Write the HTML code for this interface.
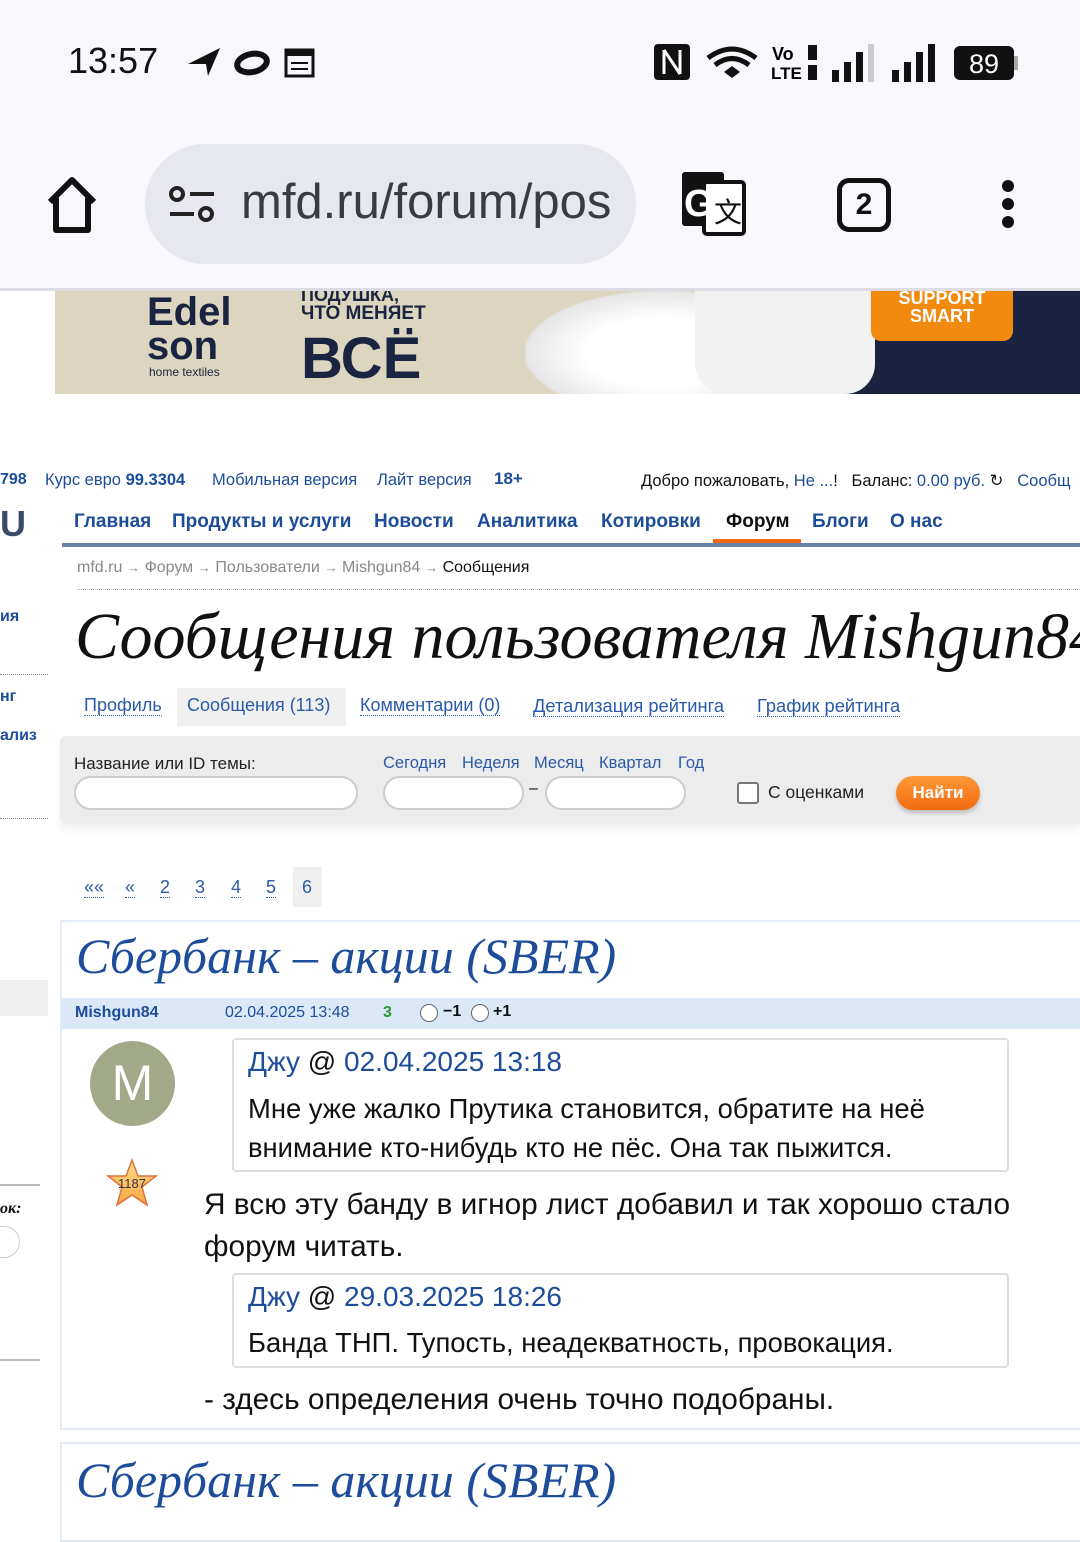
<!DOCTYPE html>
<html><head><meta charset="utf-8"><style>
*{margin:0;padding:0;box-sizing:border-box}
body{width:1080px;height:1520px;overflow:hidden;background:#fff;font-family:"Liberation Sans","DejaVu Sans",sans-serif;position:relative;color:#111}
.a{position:absolute;white-space:nowrap}
.blue{color:#1d4d9a}
.lnk{color:#2a5aa8;border-bottom:1px dotted #2a5aa8}
.ser{font-family:"Liberation Serif","DejaVu Serif",serif;font-style:italic}
.nv{position:absolute;top:511px;font-size:19px;font-weight:bold;color:#1d4d9a;white-space:nowrap}
</style></head><body>
<div class="a" style="left:0;top:0;width:1080px;height:290px;background:#f7f7fc"></div>
<div class="a" style="left:68px;top:40px;font-size:36px;color:#111">13:57</div>
<svg class="a" style="left:186px;top:44px" width="132" height="36" viewBox="0 0 132 36">
<path d="M2 20 L34 4 L22 32 L20 20 Z" fill="#111"/>
<ellipse cx="66" cy="19" rx="15" ry="9" fill="none" stroke="#111" stroke-width="6" transform="rotate(-12 66 19)"/>
<rect x="100" y="6" width="27" height="26" fill="none" stroke="#111" stroke-width="3"/><rect x="100" y="6" width="27" height="6" fill="#111"/><line x1="105" y1="19" x2="122" y2="19" stroke="#111" stroke-width="2"/><line x1="105" y1="25" x2="122" y2="25" stroke="#111" stroke-width="2"/>
</svg>
<svg class="a" style="left:652px;top:42px" width="370" height="42" viewBox="0 0 370 42">
<rect x="2" y="2" width="36" height="36" rx="4" fill="#111"/><path d="M12 8 V32 M12 8 L28 32 M28 8 V32" stroke="#fff" stroke-width="3" fill="none"/>
<path d="M56 16 Q80 -2 104 16" stroke="#111" stroke-width="5" fill="none"/><path d="M63 23 Q80 10 97 23" stroke="#111" stroke-width="5" fill="none"/><path d="M72 30 L80 24 L88 30 L80 36 Z" fill="#111"/>
<text x="120" y="18" font-size="18" font-weight="bold" font-family="Liberation Sans">Vo</text><text x="119" y="37" font-size="17" font-weight="bold" font-family="Liberation Sans">LTE</text>
<rect x="156" y="3" width="9" height="15" fill="#111"/><rect x="156" y="23" width="9" height="15" fill="#111"/>
<rect x="180" y="28" width="7" height="12" fill="#111"/><rect x="192" y="20" width="7" height="20" fill="#111"/><rect x="204" y="10" width="7" height="30" fill="#111"/><rect x="216" y="2" width="6" height="38" fill="#ccc"/>
<rect x="240" y="28" width="7" height="12" fill="#111"/><rect x="252" y="20" width="7" height="20" fill="#111"/><rect x="264" y="10" width="7" height="30" fill="#111"/><rect x="276" y="2" width="7" height="38" fill="#111"/>
<rect x="302" y="4" width="60" height="34" rx="6" fill="#111"/><rect x="362" y="14" width="4" height="14" fill="#aaa"/>
<text x="332" y="31" font-size="27" fill="#fff" text-anchor="middle" font-family="Liberation Sans">89</text>
</svg>
<svg class="a" style="left:44px;top:176px" width="56" height="58" viewBox="0 0 56 58"><path d="M6 26 L28 4 L50 26 M12 22 V54 H44 V22" stroke="#111" stroke-width="6" fill="none" stroke-linejoin="round"/></svg>
<div class="a" style="left:145px;top:144px;width:491px;height:120px;border-radius:60px;background:#e7e7ef"></div>
<svg class="a" style="left:168px;top:186px" width="48" height="38" viewBox="0 0 48 38"><circle cx="9" cy="8" r="6" stroke="#222" stroke-width="4" fill="none"/><line x1="22" y1="8" x2="46" y2="8" stroke="#222" stroke-width="4"/><line x1="2" y1="28" x2="26" y2="28" stroke="#222" stroke-width="4"/><circle cx="38" cy="28" r="6" stroke="#222" stroke-width="4" fill="none"/></svg>
<div class="a" style="left:241px;top:174px;font-size:49px;color:#3b3b44;width:372px;overflow:hidden">mfd.ru/forum/pos</div>
<svg class="a" style="left:680px;top:170px" width="68" height="68" viewBox="0 0 68 68"><rect x="2" y="2" width="42" height="54" rx="3" fill="#111"/><rect x="24" y="12" width="40" height="52" rx="3" fill="#fff" stroke="#111" stroke-width="4"/><text x="4" y="46" font-size="38" font-weight="bold" fill="#fff" font-family="Liberation Sans">G</text><text x="34" y="52" font-size="28" fill="#111" font-family="Liberation Sans">文</text></svg>
<div class="a" style="left:837px;top:178px;width:54px;height:54px;border:5px solid #111;border-radius:12px;font-size:30px;text-align:center;line-height:44px;font-weight:bold">2</div>
<svg class="a" style="left:998px;top:178px" width="20" height="52"><circle cx="10" cy="8" r="6" fill="#111"/><circle cx="10" cy="26" r="6" fill="#111"/><circle cx="10" cy="44" r="6" fill="#111"/></svg>
<div class="a" style="left:0;top:288px;width:1080px;height:3px;background:#dcdce2"></div>

<div class="a" style="left:55px;top:291px;width:1025px;height:103px;background:#dcd5bf;overflow:hidden">
<div class="a" style="left:640px;top:0;width:400px;height:103px;background:#1a2440"></div>
<div class="a" style="left:470px;top:0;width:230px;height:103px;background:radial-gradient(ellipse at 60% 60%,#fff 40%,#e6e6e6 70%,rgba(220,213,191,0) 72%)"></div>
<div class="a" style="left:640px;top:0;width:180px;height:103px;background:#f2f2f2;border-radius:0 0 30px 30px"></div>
<div class="a" style="left:92px;top:4px;font-size:40px;font-weight:bold;color:#1a2440;line-height:34px">Edel<br>son</div>
<div class="a" style="left:94px;top:74px;font-size:12px;color:#1a2440">home textiles</div>
<div class="a" style="left:246px;top:-6px;font-size:18px;font-weight:bold;color:#1a2440">ПОДУШКА,</div>
<div class="a" style="left:246px;top:12px;font-size:19px;font-weight:bold;color:#1a2440">ЧТО МЕНЯЕТ</div>
<div class="a" style="left:246px;top:38px;font-size:58px;font-weight:bold;color:#1a2440;line-height:60px">ВСЁ</div>
<div class="a" style="left:816px;top:-10px;width:142px;height:60px;background:#f28a10;border-radius:0 0 10px 10px;color:#fff;font-weight:bold;font-size:18px;text-align:center;line-height:18px;padding-top:8px">SUPPORT<br>SMART</div>
</div>

<div class="a" style="left:0;top:471px;font-size:16px;color:#1d4d9a"><b>798</b></div>
<div class="a" style="left:45px;top:471px;font-size:16.5px;color:#1d4d9a">Курс евро <b>99.3304</b></div>
<div class="a" style="left:212px;top:471px;font-size:16.5px;color:#1d4d9a">Мобильная версия</div>
<div class="a" style="left:377px;top:471px;font-size:16.5px;color:#1d4d9a">Лайт версия</div>
<div class="a" style="left:494px;top:469px;font-size:17px;font-weight:bold;color:#1d4d9a">18+</div>
<div class="a" style="left:641px;top:471px;font-size:16.5px;color:#111">Добро пожаловать, <span class="blue">Не ...</span>!&nbsp;&nbsp;&nbsp;Баланс: <span class="blue">0.00 руб.</span> ↻&nbsp;&nbsp;&nbsp;<span class="blue">Сообщ</span></div>
<div class="a" style="left:0;top:503px;font-size:36px;font-weight:bold;color:#3a4a6a">U</div>
<div class="nv" style="left:74px">Главная</div>
<div class="nv" style="left:172px">Продукты и услуги</div>
<div class="nv" style="left:374px">Новости</div>
<div class="nv" style="left:477px">Аналитика</div>
<div class="nv" style="left:601px">Котировки</div>
<div class="nv" style="left:726px;color:#111">Форум</div>
<div class="nv" style="left:812px">Блоги</div>
<div class="nv" style="left:890px">О нас</div>
<div class="a" style="left:713px;top:539px;width:88px;height:6px;background:#f26a10"></div>
<div class="a" style="left:62px;top:543px;width:1018px;height:4px;background:#6a80aa"></div>
<div class="a" style="left:77px;top:559px;font-size:16px;color:#888">mfd.ru <small>→</small> Форум <small>→</small> Пользователи <small>→</small> Mishgun84 <small>→</small> <span style="color:#111">Сообщения</span></div>
<div class="a" style="left:77px;top:589px;width:1003px;border-top:1px dotted #aaa"></div>
<div class="a" style="left:0;top:608px;font-size:16px;font-weight:bold;color:#1d4d9a">ия</div>
<div class="a" style="left:0;top:674px;width:48px;border-top:1px dotted #888"></div>
<div class="a" style="left:0;top:688px;font-size:16px;font-weight:bold;color:#1d4d9a">нг</div>
<div class="a" style="left:0;top:727px;font-size:16px;font-weight:bold;color:#1d4d9a">ализ</div>
<div class="a" style="left:0;top:818px;width:48px;border-top:1px dotted #888"></div>

<div class="a ser" style="left:75px;top:599px;font-size:66px;color:#111">Сообщения пользователя Mishgun84</div>

<div class="a" style="left:177px;top:688px;width:169px;height:38px;background:#f0f0f0"></div>
<div class="a" style="left:84px;top:695px;font-size:18px"><span class="lnk">Профиль</span></div>
<div class="a" style="left:187px;top:695px;font-size:18px;color:#2a5aa8">Сообщения (113)</div>
<div class="a" style="left:360px;top:695px;font-size:18px"><span class="lnk">Комментарии (0)</span></div>
<div class="a" style="left:533px;top:695px;font-size:18.3px"><span class="lnk">Детализация рейтинга</span></div>
<div class="a" style="left:757px;top:695px;font-size:18.3px"><span class="lnk">График рейтинга</span></div>

<div class="a" style="left:60px;top:736px;width:1020px;height:88px;background:#ececec;border-radius:6px 0 0 6px;box-shadow:0 6px 8px rgba(0,0,0,0.06)"></div>
<div class="a" style="left:74px;top:754px;font-size:17px;color:#222">Название или ID темы:</div>
<div class="a" style="left:74px;top:776px;width:284px;height:34px;background:#fff;border:2px solid #ccc;border-radius:17px"></div>
<div class="a" style="left:383px;top:754px;font-size:16.5px;color:#2a5aa8">Сегодня</div>
<div class="a" style="left:462px;top:754px;font-size:16.5px;color:#2a5aa8">Неделя</div>
<div class="a" style="left:534px;top:754px;font-size:16.5px;color:#2a5aa8">Месяц</div>
<div class="a" style="left:599px;top:754px;font-size:16.5px;color:#2a5aa8">Квартал</div>
<div class="a" style="left:678px;top:754px;font-size:16.5px;color:#2a5aa8">Год</div>
<div class="a" style="left:383px;top:776px;width:141px;height:34px;background:#fff;border:2px solid #ccc;border-radius:17px"></div>
<div class="a" style="left:529px;top:780px;font-size:16px">–</div>
<div class="a" style="left:545px;top:776px;width:141px;height:34px;background:#fff;border:2px solid #ccc;border-radius:17px"></div>
<div class="a" style="left:737px;top:782px;width:22px;height:22px;background:#fff;border:2px solid #777;border-radius:3px"></div>
<div class="a" style="left:768px;top:782px;font-size:17.5px;color:#222">С оценками</div>
<div class="a" style="left:896px;top:776px;width:84px;height:34px;background:linear-gradient(#ff9a3a,#f26a10);border-radius:17px;color:#fff;font-weight:bold;font-size:17px;text-align:center;line-height:34px;box-shadow:0 3px 4px rgba(0,0,0,0.2)">Найти</div>

<div class="a" style="left:293px;top:867px;width:29px;height:40px;background:#f0f0f0"></div>
<div class="a" style="left:84px;top:877px;font-size:18px"><span class="lnk">««</span></div>
<div class="a" style="left:125px;top:877px;font-size:18px"><span class="lnk">«</span></div>
<div class="a" style="left:160px;top:877px;font-size:18px"><span class="lnk">2</span></div>
<div class="a" style="left:195px;top:877px;font-size:18px"><span class="lnk">3</span></div>
<div class="a" style="left:231px;top:877px;font-size:18px"><span class="lnk">4</span></div>
<div class="a" style="left:266px;top:877px;font-size:18px"><span class="lnk">5</span></div>
<div class="a" style="left:302px;top:877px;font-size:18px;color:#2a5aa8">6</div>

<div class="a" style="left:60px;top:920px;width:1030px;height:510px;border:2px solid #e2ebf3"></div>
<div class="a" style="left:0;top:980px;width:48px;height:36px;background:#f0f0f0"></div>
<div class="a ser" style="left:76px;top:927px;font-size:50px;color:#1d4d9a">Сбербанк – акции (SBER)</div>
<div class="a" style="left:62px;top:998px;width:1018px;height:31px;background:#dbe8f8"></div>
<div class="a" style="left:75px;top:1004px;font-size:16px;font-weight:bold;color:#1d4d9a">Mishgun84</div>
<div class="a" style="left:225px;top:1004px;font-size:16px;color:#1d4d9a">02.04.2025 13:48</div>
<div class="a" style="left:383px;top:1004px;font-size:16px;font-weight:bold;color:#2a9a2a">3</div>
<div class="a" style="left:420px;top:1004px;width:18px;height:18px;border:1px solid #666;border-radius:50%;background:#fff"></div>
<div class="a" style="left:443px;top:1003px;font-size:16px;font-weight:bold">−1</div>
<div class="a" style="left:471px;top:1004px;width:18px;height:18px;border:1px solid #666;border-radius:50%;background:#fff"></div>
<div class="a" style="left:493px;top:1003px;font-size:16px;font-weight:bold">+1</div>
<div class="a" style="left:90px;top:1041px;width:85px;height:85px;border-radius:50%;background:#a1a988;color:#fff;font-size:50px;text-align:center;line-height:85px">M</div>
<svg class="a" style="left:106px;top:1158px" width="52" height="50" viewBox="0 0 52 50"><defs><linearGradient id="g" x1="0" y1="0" x2="0" y2="1"><stop offset="0" stop-color="#ffe08a"/><stop offset="1" stop-color="#f5a640"/></linearGradient></defs><path d="M26 2 L32 18 L50 18 L36 29 L41 47 L26 37 L11 47 L16 29 L2 18 L20 18 Z" fill="url(#g)" stroke="#e07040" stroke-width="1.5"/><text x="26" y="30" font-size="13" text-anchor="middle" fill="#334" font-family="Liberation Sans">1187</text></svg>
<div class="a" style="left:0;top:1184px;width:40px;height:2px;background:#bbb"></div>
<div class="a ser" style="left:0;top:1200px;font-size:16px;font-weight:bold">ок:</div>
<div class="a" style="left:-20px;top:1226px;width:40px;height:32px;border:1px solid #ccc;border-radius:16px"></div>
<div class="a" style="left:0;top:1359px;width:40px;height:2px;background:#bbb"></div>

<div class="a" style="left:232px;top:1038px;width:777px;height:134px;border:2px solid #ddd;border-radius:4px"></div>
<div class="a" style="left:248px;top:1046px;font-size:28px;color:#1d4d9a">Джу <span style="color:#111">@</span> 02.04.2025 13:18</div>
<div class="a" style="left:248px;top:1089px;font-size:27.4px;line-height:39px;color:#111">Мне уже жалко Прутика становится, обратите на неё<br>внимание кто-нибудь кто не пёс. Она так пыжится.</div>
<div class="a" style="left:204px;top:1184px;font-size:29.8px;line-height:42px;color:#111">Я всю эту банду в игнор лист добавил и так хорошо стало<br>форум читать.</div>
<div class="a" style="left:232px;top:1273px;width:777px;height:95px;border:2px solid #ddd;border-radius:4px"></div>
<div class="a" style="left:248px;top:1281px;font-size:28px;color:#1d4d9a">Джу <span style="color:#111">@</span> 29.03.2025 18:26</div>
<div class="a" style="left:248px;top:1327px;font-size:27.4px;color:#111">Банда ТНП. Тупость, неадекватность, провокация.</div>
<div class="a" style="left:204px;top:1383px;font-size:29.8px;color:#111">- здесь определения очень точно подобраны.</div>

<div class="a" style="left:60px;top:1442px;width:1030px;height:100px;border:2px solid #e2ebf3"></div>
<div class="a ser" style="left:76px;top:1451px;font-size:50px;color:#1d4d9a">Сбербанк – акции (SBER)</div>
</body></html>
